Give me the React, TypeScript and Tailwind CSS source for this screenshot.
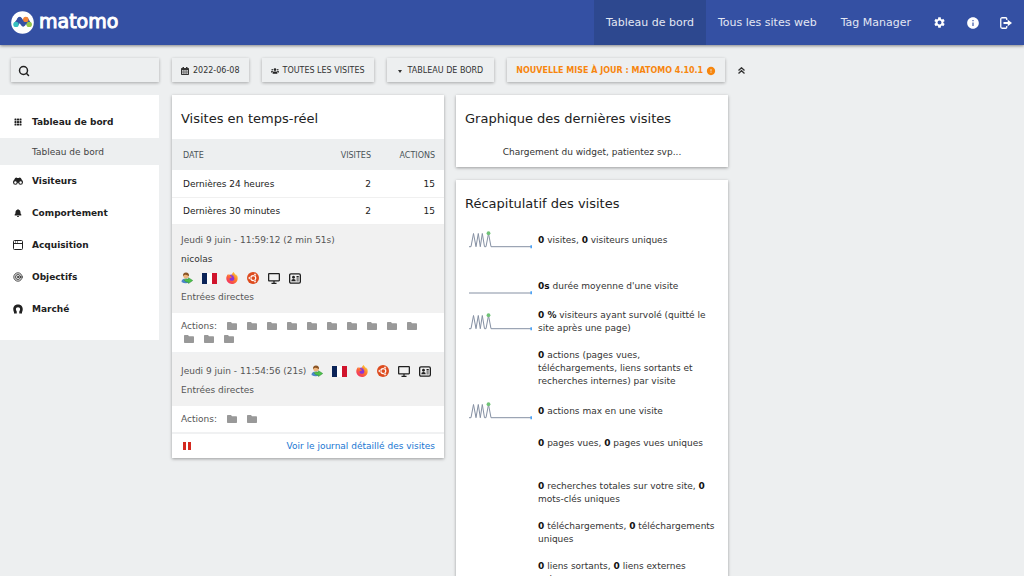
import type { ReactNode } from "react";
import { Search, Target } from "lucide-react";
import { FaBell, FaUsers } from "react-icons/fa";
import { BsGrid3X3GapFill } from "react-icons/bs";
import { MdError, MdInfo, MdSettings } from "react-icons/md";
import { FaFirefoxBrowser } from "react-icons/fa6";

/* Icons */

function LogoMark() {
  return (
    <svg viewBox="0 0 23 23" className="size-[23px] shrink-0" aria-hidden="true">
      <circle cx="11.5" cy="11.5" r="11.3" fill="#fff" />
      <path d="M5.2 13.2 8.6 8.6" stroke="#3450a3" strokeWidth="4.6" strokeLinecap="round" />
      <path d="M8.6 8.2 12.2 13.2 15 9" stroke="#3450a3" strokeWidth="4.6" strokeLinecap="round" strokeLinejoin="round" fill="none" />
      <path d="M15 8.4 18 13.3" stroke="#3450a3" strokeWidth="4.6" strokeLinecap="round" />
      <circle cx="18.2" cy="13.4" r="2.7" fill="#95c748" />
      <circle cx="5" cy="13.4" r="2.7" fill="#35bfc0" />
      <circle cx="14.8" cy="8.4" r="2.7" fill="#f38334" />
    </svg>
  );
}

function SignOutIcon() {
  return (
    <svg viewBox="0 0 24 24" className="h-[12px] w-[12px]" fill="none" stroke="currentColor" strokeWidth="2.6" aria-hidden="true">
      <path d="M13.500 6V3.500q0-2-2-2H4.500q-3 0-3 3v15q0 3 3 3h7q2 0 2-2V18" />
      <path d="M7 12h11" strokeWidth="4" />
      <path d="M15.500 5.500v13L24 12Z" fill="currentColor" stroke="none" />
    </svg>
  );
}

function CalendarIcon() {
  return (
    <svg viewBox="0 0 16 16" className="size-[8px]" aria-hidden="true">
      <path d="M3 0h3v2h4V0h3v2h1.500q1.500 0 1.500 1.500V14.500q0 1.500-1.500 1.500H1.500Q0 16 0 14.500V3.500Q0 2 1.500 2H3Z" fill="#333" />
      <path d="M2 6h12v8H2Z" fill="#c9cacb" />
      <path d="M2 8.600h12M2 11.300h12M5 6v8M8 6v8M11 6v8" stroke="#666" strokeWidth="1" />
    </svg>
  );
}

function BinocularsIcon() {
  return (
    <svg viewBox="0 0 20 16" className="h-[8px] w-[10px]" aria-hidden="true">
      <path d="M4 2.500Q6.500 0 8.500 2h3q2-2 4.500.500L19.500 9v3h-19V9Z" fill="currentColor" />
      <circle cx="4.800" cy="10.800" r="3.600" fill="#fff" stroke="currentColor" strokeWidth="2.200" />
      <circle cx="15.200" cy="10.800" r="3.600" fill="#fff" stroke="currentColor" strokeWidth="2.200" />
    </svg>
  );
}

function WindowIcon() {
  return (
    <svg viewBox="0 0 20 20" className="size-[10px]" fill="none" stroke="currentColor" strokeWidth="2" aria-hidden="true">
      <rect x="1" y="1" width="18" height="18" rx="2" />
      <path d="M1 7h18M4 4h2M8 4h2" />
    </svg>
  );
}

function HorseshoeIcon() {
  return (
    <svg viewBox="0 0 20 20" className="size-[10px]" aria-hidden="true">
      <path
        d="M2 19V16.500C-1 11 0 1 10 1s11 10 8 15.500V19h-5.500v-4c3-4 2-8.500-2.500-8.500S4.500 11 7.500 15v4Z"
        fill="currentColor"
      />
    </svg>
  );
}

function DoubleChevronUp() {
  return (
    <svg viewBox="0 0 14 14" className="size-[7px]" fill="none" stroke="currentColor" strokeWidth="2.600" aria-hidden="true">
      <path d="M1 7 7 1.500 13 7M1 13 7 7.500 13 13" />
    </svg>
  );
}

function FolderIcon() {
  return (
    <svg viewBox="0 0 20 16" className="h-[8px] w-[10px]" fill="#999" aria-hidden="true">
      <path d="M1.500 0H8l2 2.500h8.500Q20 2.500 20 4v10.500q0 1.500-1.500 1.500h-17Q0 16 0 14.500v-13Q0 0 1.500 0Z" />
    </svg>
  );
}

function ReturningVisitorIcon() {
  return (
    <svg viewBox="0 0 24 24" className="size-[12px]" aria-hidden="true">
      <path d="M1 20q0-7 8.500-7t8 7Q9.500 25 1 20Z" fill="#4b86c9" />
      <path d="M6 14l3.500 4 3.500-4Z" fill="#f7e7d0" />
      <circle cx="10" cy="7.500" r="5.500" fill="#efb67c" />
      <path d="M4 8.500Q3.500 1 10 1t6 7.500Q12 5 8.500 5.500 5.500 6 4 8.500Z" fill="#8b5525" />
      <path d="M6 15.500q4-2 9-1v-3l8.500 5.500-8.500 6v-3q-5 2-9-4.500Z" fill="#4fc14c" stroke="#2f8f35" strokeWidth="1" />
    </svg>
  );
}

function FranceFlag() {
  return (
    <svg viewBox="0 0 15 11" className="h-[11px] w-[15px]" aria-hidden="true">
      <rect width="15" height="11" fill="#fff" />
      <rect width="5" height="11" fill="#0b2458" />
      <rect x="10" width="5" height="11" fill="#d0142c" />
    </svg>
  );
}

function FirefoxIcon() {
  return (
    <svg viewBox="0 0 24 24" className="size-[12px]" aria-hidden="true">
      <defs>
        <linearGradient id="firefox" x1="0.9" y1="0" x2="0.1" y2="1">
          <stop offset="0" stopColor="#ffd83a" />
          <stop offset="0.45" stopColor="#ff7a2b" />
          <stop offset="1" stopColor="#f0246c" />
        </linearGradient>
      </defs>
      <circle cx="12" cy="13" r="8" fill="#8a35d6" />
      <FaFirefoxBrowser size={24} fill="url(#firefox)" />
    </svg>
  );
}

function UbuntuIcon() {
  return (
    <svg viewBox="0 0 24 24" className="size-[12px]" aria-hidden="true">
      <circle cx="12" cy="12" r="12" fill="#dd4b1e" />
      <circle cx="12.500" cy="12" r="5" fill="none" stroke="#fff" strokeWidth="2.500" />
      <g fill="#fff" stroke="#dd4b1e" strokeWidth="1">
        <circle cx="4.800" cy="12" r="2.400" />
        <circle cx="16" cy="5.400" r="2.400" />
        <circle cx="16" cy="18.600" r="2.400" />
      </g>
    </svg>
  );
}

function DesktopIcon() {
  return (
    <svg viewBox="0 0 24 22" className="h-[11px] w-[12px]" fill="none" stroke="#1f1f1f" strokeWidth="2.500" aria-hidden="true">
      <rect x="1.300" y="1.300" width="21.400" height="14.400" rx="1" />
      <path d="M12 16v4M7 20.500h10" />
    </svg>
  );
}

function ProfileCardIcon() {
  return (
    <svg viewBox="0 0 24 22" className="h-[11px] w-[12px]" fill="#1f1f1f" aria-hidden="true">
      <rect x="1.300" y="1.800" width="21.400" height="18.400" rx="2.500" fill="none" stroke="#1f1f1f" strokeWidth="2.600" />
      <circle cx="9" cy="8.500" r="2.800" />
      <path d="M4.500 16.500q0-4.500 4.500-4.500t4.500 4.500Z" />
      <path d="M15 6h4.500v3H15ZM15 11h4.500v2H15ZM15 15h4.500v1.500H15Z" />
    </svg>
  );
}

function Sparkline({ flat }: { flat?: boolean }) {
  return (
    <svg viewBox="0 0 63 18" className="h-[18px] w-[63px] shrink-0" fill="none" aria-hidden="true">
      <path
        d={flat ? "M0 16H62" : "M0 15.700H2L4.500 2.500 7 15.700 9.300 2.500 11.300 15.700 13.300 2.500 15.500 15.700H17L19.500 2.500 22 15.700H62"}
        stroke="#8590a3"
        strokeWidth="1"
      />
      {!flat && <circle cx="19.500" cy="2.200" r="1.900" fill="#6fc276" />}
      <path d="M62.200 14.200v3" stroke="#4ba3f7" strokeWidth="1.600" />
    </svg>
  );
}

/* Data */

const topLinks = [
  { label: "Tableau de bord", active: true },
  { label: "Tous les sites web", active: false },
  { label: "Tag Manager", active: false },
];

const topIcons = [
  { label: "Administration", icon: <MdSettings size={13} /> },
  { label: "Aide", icon: <MdInfo size={14} /> },
  { label: "Déconnexion", icon: <SignOutIcon /> },
];

const menu = [
  { label: "Tableau de bord", icon: <BsGrid3X3GapFill size={8} />, child: "Tableau de bord" },
  { label: "Visiteurs", icon: <BinocularsIcon /> },
  { label: "Comportement", icon: <FaBell size={8} /> },
  { label: "Acquisition", icon: <WindowIcon /> },
  { label: "Objectifs", icon: <Target size={10} strokeWidth={2} /> },
  { label: "Marché", icon: <HorseshoeIcon /> },
];

const totals = [
  { label: "Dernières 24 heures", visits: 2, actions: 15 },
  { label: "Dernières 30 minutes", visits: 2, actions: 15 },
];

type Metric = { id: string; text: ReactNode; chart?: "peaks" | "flat"; tall?: boolean };

const metrics: Metric[] = [
  { id: "visits", chart: "peaks", tall: true, text: <><b>0</b> visites, <b>0</b> visiteurs uniques</> },
  { id: "duration", chart: "flat", text: <><b>0s</b> durée moyenne d'une visite</> },
  { id: "bounce", chart: "peaks", text: <><b>0 %</b> visiteurs ayant survolé (quitté le site après une page)</> },
  { id: "actions", text: <><b>0</b> actions (pages vues, téléchargements, liens sortants et recherches internes) par visite</> },
  { id: "max", chart: "peaks", text: <><b>0</b> actions max en une visite</> },
  { id: "pageviews", tall: true, text: <><b>0</b> pages vues, <b>0</b> pages vues uniques</> },
  { id: "searches", text: <><b>0</b> recherches totales sur votre site, <b>0</b> mots-clés uniques</> },
  { id: "downloads", text: <><b>0</b> téléchargements, <b>0</b> téléchargements uniques</> },
  { id: "outlinks", text: <><b>0</b> liens sortants, <b>0</b> liens externes uniques</> },
];

/* Page parts */

function Header() {
  return (
    <header className="relative z-10 flex h-[45px] items-stretch justify-between bg-[#3450a3] pr-[2px] text-white shadow-[0_1px_3px_rgba(0,0,0,0.45)]">
      <a href="#" className="flex items-center gap-[5px] pl-[11px]">
        <LogoMark />
        <span className="pb-[3px] text-[19px] leading-[22px] [-webkit-text-stroke:1px_white]">matomo</span>
      </a>
      <nav className="flex items-stretch">
        {topLinks.map((link) => (
          <a
            key={link.label}
            href="#"
            className={`flex items-center px-3 pt-[2px] text-[11px] text-[#e3e7f3] ${link.active ? "bg-[#2d488f]" : ""}`}
          >
            {link.label}
          </a>
        ))}
        {topIcons.map((item) => (
          <a key={item.label} href="#" aria-label={item.label} className="flex w-[33px] items-center justify-center">
            {item.icon}
          </a>
        ))}
      </nav>
    </header>
  );
}

function Sidebar() {
  return (
    <aside className="w-[159px] shrink-0 pt-[13px]">
      <label className="ml-[11px] flex h-6 items-center gap-1 pt-[2px] pl-[7px] shadow-[0_1px_3px_rgba(0,0,0,0.3)]">
        <Search size={12} strokeWidth={3} className="shrink-0 text-[#222]" />
        <input type="search" aria-label="Rechercher" className="w-full min-w-0 bg-transparent text-[9px] outline-none" />
      </label>
      <nav className="mt-[13px] bg-white pt-[11px] pb-[15px]">
        <ul>
          {menu.map((item) => (
            <li key={item.label}>
              <a href="#" className="flex h-8 items-center pl-[13px] text-[9px] font-bold text-[#212121]">
                <span className="flex w-[10px] justify-center">{item.icon}</span>
                <span className="pt-[2px] pl-[9px]">{item.label}</span>
              </a>
              {item.child && (
                <a href="#" className="flex h-[27px] items-center bg-[#edeff0] pt-[2px] pl-8 text-[9px] text-[#444]">
                  {item.child}
                </a>
              )}
            </li>
          ))}
        </ul>
      </nav>
    </aside>
  );
}

function ToolbarButton({ children, className = "px-[9px]" }: { children: ReactNode; className?: string }) {
  return (
    <button
      type="button"
      className={`flex h-6 items-center justify-center pt-[2px] text-[8px] whitespace-nowrap uppercase shadow-[0_1px_3px_rgba(0,0,0,0.3)] ${className}`}
    >
      {children}
    </button>
  );
}

function Toolbar() {
  return (
    <div className="flex items-center gap-[13px] text-[#333]">
      <ToolbarButton className="gap-1 px-[9px]">
        <CalendarIcon />
        2022-06-08
      </ToolbarButton>
      <ToolbarButton className="gap-1 px-[9px]">
        <FaUsers size={8} className="text-[#222]" />
        Toutes les visites
      </ToolbarButton>
      <ToolbarButton className="gap-[6px] px-[11px]">
        <svg viewBox="0 0 8 6" className="h-[3px] w-[4px]" fill="currentColor" aria-hidden="true">
          <path d="M0 0h8L4 6Z" />
        </svg>
        Tableau de bord
      </ToolbarButton>
      <ToolbarButton className="gap-[3px] px-[9px] font-bold text-[#f7860e]">
        Nouvelle mise à jour : Matomo 4.10.1
        <MdError size={10} />
      </ToolbarButton>
      <button type="button" aria-label="Masquer la barre">
        <DoubleChevronUp />
      </button>
    </div>
  );
}

function Widget({ title, children }: { title: string; children: ReactNode }) {
  return (
    <section className="bg-white shadow-[0_1px_3px_rgba(0,0,0,0.35)]">
      <h2 className="px-[9px] pt-[14px] pb-[10px] text-[13px] leading-5 text-[#212121]">{title}</h2>
      {children}
    </section>
  );
}

function VisitorIcons() {
  return (
    <span className="flex items-center gap-[9px]">
      <ReturningVisitorIcon />
      <FranceFlag />
      <FirefoxIcon />
      <UbuntuIcon />
      <DesktopIcon />
      <ProfileCardIcon />
    </span>
  );
}

function ActionList({ count }: { count: number }) {
  return (
    <div className="flex flex-wrap items-center border-b-2 border-[#f0f1f2] px-[9px] pt-[7px] pb-[6px] leading-[13px] text-[#555]">
      <span className="w-[43px]">Actions:</span>
      {Array.from({ length: count }, (_, i) => (
        <a key={i} href="#" aria-label={`Action ${i + 1}`} className="flex h-[13px] w-5 items-center pl-[3px]">
          <FolderIcon />
        </a>
      ))}
    </div>
  );
}

function RealTimeVisits() {
  return (
    <Widget title="Visites en temps-réel">
      <table className="w-full text-[9px] text-[#212121]">
        <thead>
          <tr className="h-[31px] bg-[#edeff0] text-[8px] text-[#4a5459] uppercase">
            <th className="pt-[2px] pl-[11px] text-left font-normal">Date</th>
            <th className="pt-[2px] text-right font-normal">Visites</th>
            <th className="w-[73px] pt-[2px] pr-[9px] pl-4 text-right font-normal">Actions</th>
          </tr>
        </thead>
        <tbody>
          {totals.map((row) => (
            <tr key={row.label} className="h-[27px] border-b border-[#f0f0f0]">
              <td className="pt-[2px] pl-[11px]">{row.label}</td>
              <td className="pt-[2px] text-right">{row.visits}</td>
              <td className="pt-[2px] pr-[9px] text-right">{row.actions}</td>
            </tr>
          ))}
        </tbody>
      </table>

      <div className="text-[9px] text-[#555]">
        <div className="bg-[#f1f1f1] px-[9px] py-[6px] leading-[19px]">
          <p>Jeudi 9 juin - 11:59:12 (2 min 51s)</p>
          <p className="text-[#333]">nicolas</p>
          <div className="flex h-[19px] items-center">
            <VisitorIcons />
          </div>
          <p>Entrées directes</p>
        </div>
        <ActionList count={13} />
        <div className="bg-[#f1f1f1] px-[9px] pt-2 pb-[6px] leading-[19px]">
          <div className="flex items-center gap-[5px] whitespace-nowrap">
            Jeudi 9 juin - 11:54:56 (21s)
            <VisitorIcons />
          </div>
          <p>Entrées directes</p>
        </div>
        <ActionList count={2} />
        <div className="flex h-6 items-center justify-between pr-[9px] pl-[11px]">
          <button type="button" aria-label="Pause" className="flex gap-[2px]">
            <span className="h-2 w-[3px] bg-[#d4291f]" />
            <span className="h-2 w-[3px] bg-[#d4291f]" />
          </button>
          <a href="#" className="pt-[2px] text-[#1976d2]">
            Voir le journal détaillé des visites
          </a>
        </div>
      </div>
    </Widget>
  );
}

function VisitsOverview() {
  return (
    <Widget title="Récapitulatif des visites">
      <ul className="flex flex-col gap-[14px] px-[7px] pt-[7px] pb-4 pl-[13px] text-[9px] leading-[13px] text-[#333]">
        {metrics.map((metric) => (
          <li key={metric.id} className={metric.tall ? "pb-[14px]" : ""}>
            <div className="flex min-h-[18px] items-center gap-[6px]">
              <div className="w-[63px] shrink-0">
                {metric.chart && <Sparkline flat={metric.chart === "flat"} />}
              </div>
              <p className="[&>b]:text-[#111]">{metric.text}</p>
            </div>
          </li>
        ))}
      </ul>
    </Widget>
  );
}

export default function App() {
  return (
    <div className="min-h-screen bg-[#edeff0] font-['DejaVu_Sans',sans-serif]">
      <Header />
      <div className="flex items-start">
        <Sidebar />
        <main className="min-w-0 flex-1 pt-[13px] pr-3 pl-[13px]">
          <Toolbar />
          <div className="mt-[13px] grid grid-cols-3 items-start gap-3">
            <RealTimeVisits />
            <div className="flex flex-col gap-[13px]">
              <Widget title="Graphique des dernières visites">
                <p className="pt-[7px] pb-[8px] text-center text-[9px] leading-[13px] text-[#333]">
                  Chargement du widget, patientez svp...
                </p>
              </Widget>
              <VisitsOverview />
            </div>
          </div>
        </main>
      </div>
    </div>
  );
}
